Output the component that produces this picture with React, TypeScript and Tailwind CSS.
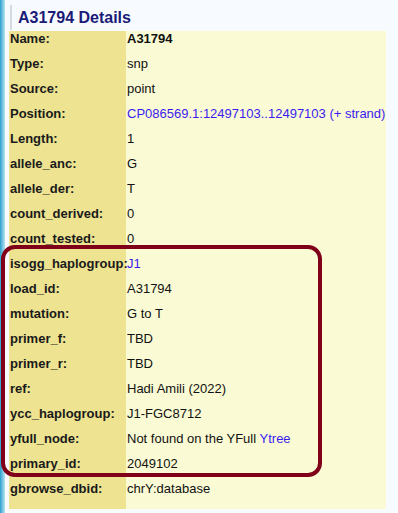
import type { ReactNode } from 'react'

type Row = { label: string; value: ReactNode }

const link = 'text-[#3a1df0]'

const rows: Row[] = [
  { label: 'Name:', value: <span className="font-bold">A31794</span> },
  { label: 'Type:', value: 'snp' },
  { label: 'Source:', value: 'point' },
  {
    label: 'Position:',
    value: <span className={link}>CP086569.1:12497103..12497103 (+ strand)</span>,
  },
  { label: 'Length:', value: '1' },
  { label: 'allele_anc:', value: 'G' },
  { label: 'allele_der:', value: 'T' },
  { label: 'count_derived:', value: '0' },
  { label: 'count_tested:', value: '0' },
  { label: 'isogg_haplogroup:', value: <span className={link}>J1</span> },
  { label: 'load_id:', value: 'A31794' },
  { label: 'mutation:', value: 'G to T' },
  { label: 'primer_f:', value: 'TBD' },
  { label: 'primer_r:', value: 'TBD' },
  { label: 'ref:', value: 'Hadi Amili (2022)' },
  { label: 'ycc_haplogroup:', value: 'J1-FGC8712' },
  {
    label: 'yfull_node:',
    value: (
      <>
        Not found on the YFull <span className={link}>Ytree</span>
      </>
    ),
  },
  { label: 'primary_id:', value: '2049102' },
  { label: 'gbrowse_dbid:', value: 'chrY:database' },
]

export default function App() {
  return (
    <div className="relative flex min-h-[513px] bg-[#f7faff] font-['Liberation_Sans',Arial,sans-serif] text-[13px] text-[#111]">
      {/* page edge */}
      <div className="w-[5px] shrink-0 bg-gradient-to-r from-[#1a9fcc] to-[#b5e4f3]" />

      <div className="pl-[4px]">
        <div className="ml-px mt-[5px] flex h-[25px] items-center border-l-2 border-[#d3dae2] pl-[6px]">
          <h2 className="text-[16px] font-bold text-[#1b1b78]">A31794 Details</h2>
        </div>

        <div className="mt-px flex w-[377px] flex-col bg-[#fafad4] pb-[3px]">
          {rows.map((r) => (
            <div key={r.label} className="flex h-[25px] items-start leading-[15px]">
              <div className="h-full w-[117px] shrink-0 bg-[#ede391] pl-px font-bold text-[#1a1a1a]">
                {r.label}
              </div>
              <div className="whitespace-nowrap pl-px">{r.value}</div>
            </div>
          ))}
        </div>
        <div className="-mt-[3px] h-[3px] w-[117px] bg-[#ede391]" />
      </div>

      {/* highlight around the annotation fields */}
      <div className="pointer-events-none absolute left-px top-[245px] h-[232px] w-[321px] rounded-[14px] border-4 border-[#80001a]" />
    </div>
  )
}
